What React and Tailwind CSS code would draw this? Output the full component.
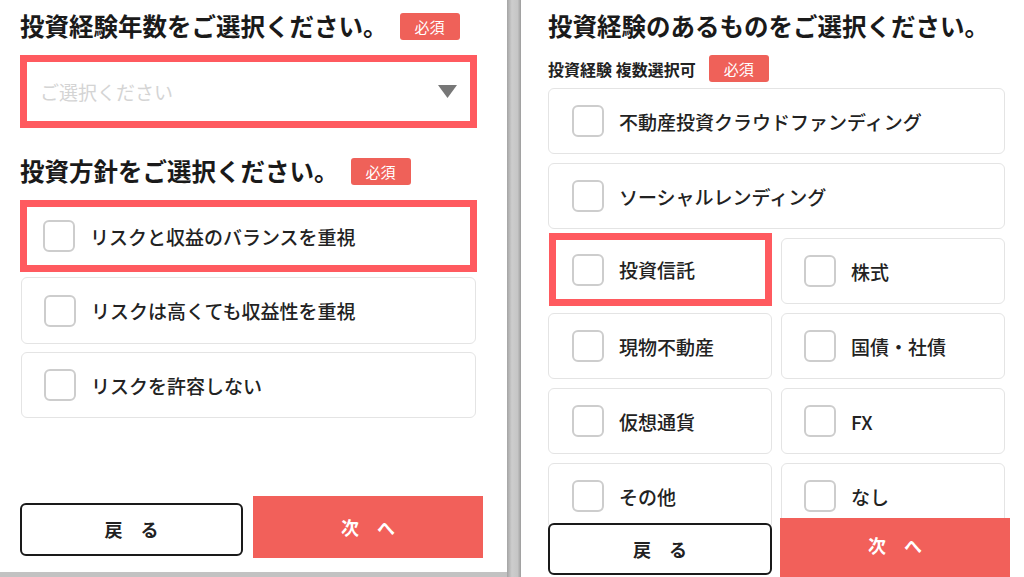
import React from 'react';

const Badge = ({ className = '' }) => (
    <span className={`flex h-[27px] w-[60px] shrink-0 items-center justify-center rounded-[3px] bg-[#ef6159] text-[15px] leading-none text-white ${className}`}>
        必須
    </span>
);

const Box = () => (
    <span className="h-[32px] w-[32px] shrink-0 rounded-[6px] border-2 border-[#cdcdcd] bg-white" />
);

const Option = ({ label, active = false, className = '' }) => (
    <div
        className={
            active
                ? `flex items-center gap-[15px] border-[7px] border-[#ff5a5f] bg-white pl-[16px] ${className}`
                : `flex items-center gap-[15px] rounded-[6px] border border-[#e4e4e4] bg-white pl-[22px] ${className}`
        }
    >
        <Box />
        <span className="text-[19px] font-medium leading-none text-[#222]">{label}</span>
    </div>
);

const LeftPanel = () => (
    <div className="flex h-[572px] w-[507px] shrink-0 flex-col bg-white pl-[20px] pr-[30px]">
        <div className="mt-[13px] flex h-[27px] items-center">
            <h2 className="text-[24.5px] font-bold leading-none text-[#1a1a1a]">投資経験年数をご選択ください。</h2>
            <Badge className="ml-[12px]" />
        </div>

        <div className="mt-[15px] flex h-[73px] items-center justify-between border-[7px] border-[#ff5a5f] bg-white pl-[13px] pr-[13px]">
            <span className="text-[19px] leading-none text-[#d4d4d4]">ご選択ください</span>
            <svg width="19" height="13" viewBox="0 0 19 13">
                <polygon points="0,0 19,0 9.5,13" fill="#777" />
            </svg>
        </div>

        <div className="mt-[30px] flex h-[27px] items-center">
            <h2 className="text-[24.5px] font-bold leading-none text-[#1a1a1a]">投資方針をご選択ください。</h2>
            <Badge className="ml-[12px]" />
        </div>

        <div className="mt-[17px] flex flex-col gap-[8px]">
            <Option active label="リスクと収益のバランスを重視" className="-mb-[3px] -mt-[2px] h-[72px]" />
            <Option label="リスクは高くても収益性を重視" className="mx-[1px] h-[67px]" />
            <Option label="リスクを許容しない" className="mx-[1px] h-[66px]" />
        </div>

        <div className="-mr-[6px] mt-[78px] flex items-start">
            <button className="mt-[7px] flex h-[53px] w-[223px] shrink-0 items-center justify-center rounded-[6px] border-2 border-[#1a1a1a] bg-white text-[18px] font-bold text-[#222]">
                戻　る
            </button>
            <button className="ml-[10px] flex h-[62px] w-[230px] shrink-0 items-center justify-center bg-[#f2605a] text-[18px] font-bold text-white">
                次　へ
            </button>
        </div>
    </div>
);

const RightPanel = () => (
    <div className="relative h-[577px] flex-1 overflow-hidden bg-white pl-[27px] pr-[19px]">
        <h2 className="mt-[14px] text-[24.5px] font-bold leading-[24px] text-[#1a1a1a]">投資経験のあるものをご選択ください。</h2>

        <div className="mt-[17px] flex h-[27px] items-center">
            <span className="text-[16px] font-bold leading-none text-[#222]">投資経験 複数選択可</span>
            <Badge className="ml-[13px]" />
        </div>

        <div className="mt-[6px] flex flex-col gap-[9px]">
            <Option label="不動産投資クラウドファンディング" className="h-[66px] pl-[23px]" />
            <Option label="ソーシャルレンディング" className="h-[66px] pl-[23px]" />
            <div className="grid grid-cols-2 items-start gap-x-[9px]">
                <Option active label="投資信託" className="-mb-[2px] -mt-[5px] ml-[1px] h-[73px]" />
                <Option label="株式" className="h-[66px]" />
            </div>
            <div className="grid grid-cols-2 gap-x-[9px]">
                <Option label="現物不動産" className="h-[66px] pl-[23px]" />
                <Option label="国債・社債" className="h-[66px]" />
            </div>
            <div className="grid grid-cols-2 gap-x-[9px]">
                <Option label="仮想通貨" className="h-[66px] pl-[23px]" />
                <Option label="FX" className="h-[66px]" />
            </div>
            <div className="grid grid-cols-2 gap-x-[9px]">
                <Option label="その他" className="h-[66px] pl-[23px]" />
                <Option label="なし" className="h-[66px]" />
            </div>
        </div>

        {/* fixed footer sits over the last row */}
        <div className="absolute bottom-0 left-[27px] top-[518px] flex items-start">
            <button className="mt-[5px] flex h-[52px] w-[224px] items-center justify-center rounded-[6px] border-2 border-[#1a1a1a] bg-white text-[18px] font-bold text-[#222]">
                戻　る
            </button>
            <button className="ml-[8px] flex h-full w-[230px] items-center justify-center bg-[#f2605a] pb-[4px] text-[18px] font-bold text-white">
                次　へ
            </button>
        </div>
    </div>
);

const App = () => {
    return (
        <div className="flex h-[577px] w-[1024px] overflow-hidden bg-[#c2c2c2] font-['Noto_Sans_CJK_JP',sans-serif]">
            <LeftPanel />
            <div className="h-full w-[14px] shrink-0 bg-[linear-gradient(to_right,#a4a4a4,#cdcdcd_35%,#c6c6c6_75%,#9c9c9c)]" />
            <RightPanel />
        </div>
    );
};

export default App;
